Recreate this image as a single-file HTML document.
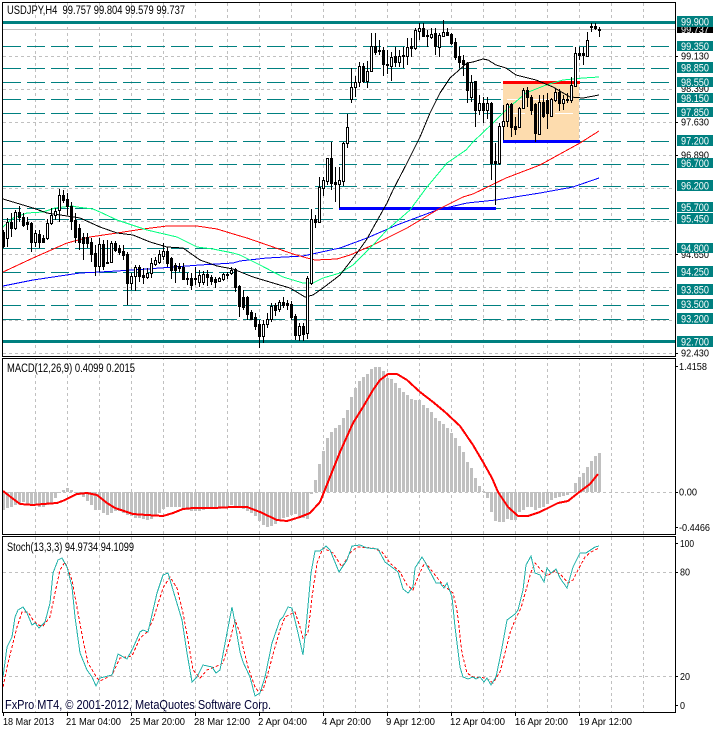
<!DOCTYPE html>
<html><head><meta charset="utf-8"><title>USDJPY,H4</title>
<style>html,body{margin:0;padding:0;background:#fff}svg{display:block}text{font-family:"Liberation Sans",sans-serif;font-size:10.5px;fill:#000}.t text,text.w{fill:#fff}polyline{shape-rendering:crispEdges}</style></head>
<body>
<svg width="713" height="729" viewBox="0 0 713 729" xmlns="http://www.w3.org/2000/svg">
<defs><clipPath id="rc"><rect x="503" y="84" width="76" height="56"/></clipPath></defs>
<rect width="713" height="729" fill="#fff"/>
<!-- vertical grid -->
<path shape-rendering="crispEdges" stroke="#c0c0c0" stroke-dasharray="3 3" fill="none" d="M35.5 3V712M67.5 3V712M99.5 3V712M131.5 3V712M163.5 3V712M195.5 3V712M227.5 3V712M259.5 3V712M291.5 3V712M323.5 3V712M355.5 3V712M387.5 3V712M419.5 3V712M451.5 3V712M483.5 3V712M515.5 3V712M547.5 3V712M579.5 3V712M611.5 3V712M643.5 3V712"/>
<!-- horizontal grid -->
<path shape-rendering="crispEdges" stroke="#c0c0c0" stroke-dasharray="3 3" fill="none" d="M3 56.5H675M3 89.5H675M3 122.5H675M3 155.5H675M3 188.5H675M3 221.5H675M3 254.5H675M3 287.5H675M3 320.5H675M3 353.5H675M3 492.5H675M3 572.5H675M3 676.5H675"/>
<!-- white under panel gaps -->
<rect x="0" y="357" width="675" height="1" fill="#fff"/><rect x="0" y="534" width="675" height="2" fill="#fff"/>
<!-- teal levels -->
<path shape-rendering="crispEdges" stroke="#008080" stroke-dasharray="18 6" fill="none" d="M3 46.5H675M3 68.5H675M3 82.5H675M3 99.5H675M3 113.5H675M3 141.5H675M3 164.5H675M3 186.5H675M3 208.5H675M3 219.5H675M3 248.5H675M3 272.5H675M3 290.5H675M3 305.5H675M3 319.5H675"/>
<path shape-rendering="crispEdges" stroke="#008080" stroke-width="3" fill="none" d="M3 22.5H675M3 341.5H675"/>
<path shape-rendering="crispEdges" stroke="#c0c0c0" fill="none" d="M3 29.5H675"/>
<!-- rectangle -->
<rect x="503" y="82" width="76" height="59" fill="#fddcae"/>
<g clip-path="url(#rc)"><path shape-rendering="crispEdges" stroke="#fff" stroke-dasharray="18 6" fill="none" d="M3 99.5H675M3 113.5H675"/></g>
<path shape-rendering="crispEdges" stroke="#ff0000" stroke-width="3" fill="none" d="M503 82.5H580"/>
<path shape-rendering="crispEdges" stroke="#0000ff" stroke-width="3" fill="none" d="M503 141.5H580M339 208.5H496"/>
<!-- MAs -->
<g fill="none" stroke-width="1">
<polyline stroke="#0000ff" points="3,286 33,280 80,273 100,272 133,270 160,268 200,265 233,263 240,261 267,258 303,256 340,248 367,238 397,225 437,210 467,203 496,200 540,193 573,187 599,178"/>
<polyline stroke="#ff0000" points="3,272 33,258 67,243 90,237 117,233 143,229 167,226 197,226 217,229 240,236 247,238 273,247 293,254 307,258 315,260 337,259 350,255 373,245 407,228 437,210 463,197 473,194 506,178 540,165 580,143 599,131"/>
<polyline stroke="#00ff7f" points="3,227 13,218 27,213 43,212 55,208 72,206 77,207 93,209 100,212 117,220 147,230 177,237 197,247 213,249 233,253 240,255 260,265 283,277 303,283 313,283 323,278 340,273 353,265 373,245 387,230 410,210 427,187 447,163 466,150 473,142 493,123 506,110 526,93 546,85 563,80 583,78 599,77"/>
<polyline stroke="#000" points="3,199 33,208 47,213 67,216 80,218 100,227 117,233 133,235 150,242 167,247 183,248 200,260 217,266 233,269 253,277 273,283 290,288 305,297 313,295 323,288 340,275 357,253 367,239 373,228 387,203 393,190 407,163 420,137 430,113 440,93 450,78 467,63 473,62 483,59 488,60 496,65 506,68 516,75 536,80 553,87 570,97 583,98 599,95"/>
</g>
<!-- wicks -->
<path shape-rendering="crispEdges" stroke="#000" fill="none" d="M3.5 230V248M7.5 218V247M11.5 213V237M15.5 210V230M19.5 206V222M23.5 213V227M27.5 217V230M31.5 222V252M35.5 230V247M39.5 230V248M43.5 235V243M47.5 219V240M51.5 208V225M55.5 208V220M59.5 189V222M63.5 190V203M67.5 193V215M71.5 202V230M75.5 213V243M79.5 224V250M83.5 233V260M87.5 233V248M91.5 238V262M95.5 245V276M99.5 238V272M103.5 240V270M107.5 240V264M111.5 241V263M115.5 241V252M119.5 245V255M123.5 245V260M127.5 252V305M131.5 273V290M135.5 265V291M139.5 265V282M143.5 268V284M147.5 268V279M151.5 258V278M155.5 257V266M159.5 250V264M163.5 243V260M167.5 247V267M171.5 257V279M175.5 263V283M179.5 263V272M183.5 263V280M187.5 273V285M191.5 273V290M195.5 267V285M199.5 270V287M203.5 271V285M207.5 270V286M211.5 275V285M215.5 277V288M219.5 277V282M223.5 273V281M227.5 272V279M231.5 267V275M235.5 268V292M239.5 285V317M243.5 290V310M247.5 296V320M251.5 310V320M255.5 313V330M259.5 320V348M263.5 320V343M267.5 313V328M271.5 303V322M275.5 303V316M279.5 300V312M283.5 297V308M287.5 300V310M291.5 301V320M295.5 314V340M299.5 323V341M303.5 323V341M307.5 276V339M311.5 209V285M315.5 215V228M319.5 177V223M323.5 177V196M327.5 158V185M331.5 142V190M335.5 167V202M339.5 167V208M343.5 142V186M347.5 114V148M351.5 68V103M355.5 76V97M359.5 62V87M363.5 63V83M367.5 61V88M371.5 33V72M375.5 33V55M379.5 40V55M383.5 47V76M387.5 50V74M391.5 52V81M395.5 47V67M399.5 50V67M403.5 47V68M407.5 38V65M411.5 38V57M415.5 28V50M419.5 23V40M423.5 23V37M427.5 30V47M431.5 28V39M435.5 28V55M439.5 33V57M443.5 20V36M447.5 28V36M451.5 33V45M455.5 38V60M459.5 47V68M463.5 55V76M467.5 62V103M471.5 75V102M475.5 81V127M479.5 95V115M483.5 97V123M487.5 97V119M491.5 102V180M495.5 143V205M499.5 123V165M503.5 105V140M507.5 103V127M511.5 103V137M515.5 117V135M519.5 107V128M523.5 88V109M527.5 87V107M531.5 95V115M535.5 103V142M539.5 95V135M543.5 95V118M547.5 93V129M551.5 98V116M555.5 88V102M559.5 89V111M563.5 95V110M567.5 93V103M571.5 77V103M575.5 47V87M579.5 47V60M583.5 47V65M587.5 32V57M591.5 23V32M595.5 23V30M599.5 27V37"/>
<!-- black bodies -->
<path shape-rendering="crispEdges" stroke="#000" fill="#000" d="M2.5 232.5h2v14h-2zM10.5 222.5h2v6h-2zM18.5 212.5h2v5h-2zM22.5 217.5h2v8h-2zM26.5 222.5h2v2h-2zM30.5 223.5h2v19h-2zM38.5 234.5h2v8h-2zM42.5 238.5h2v4h-2zM62.5 195.5h2v5h-2zM66.5 199.5h2v7h-2zM70.5 206.5h2v15h-2zM74.5 220.5h2v17h-2zM78.5 228.5h2v14h-2zM82.5 237.5h2v6h-2zM86.5 237.5h2v6h-2zM90.5 242.5h2v12h-2zM94.5 253.5h2v13h-2zM102.5 244.5h2v22h-2zM106.5 262.5h2v1h-2zM114.5 243.5h2v7h-2zM118.5 248.5h2v4h-2zM122.5 251.5h2v4h-2zM126.5 254.5h2v29h-2zM138.5 267.5h2v9h-2zM142.5 275.5h2v2h-2zM166.5 251.5h2v12h-2zM170.5 258.5h2v12h-2zM174.5 265.5h2v5h-2zM178.5 266.5h2v2h-2zM182.5 267.5h2v12h-2zM186.5 278.5h2v1h-2zM190.5 278.5h2v7h-2zM194.5 278.5h2v1h-2zM206.5 274.5h2v3h-2zM210.5 277.5h2v4h-2zM214.5 279.5h2v3h-2zM234.5 269.5h2v18h-2zM238.5 286.5h2v20h-2zM242.5 297.5h2v10h-2zM246.5 297.5h2v17h-2zM250.5 312.5h2v7h-2zM254.5 317.5h2v9h-2zM258.5 324.5h2v12h-2zM274.5 305.5h2v5h-2zM282.5 302.5h2v3h-2zM286.5 303.5h2v2h-2zM290.5 304.5h2v13h-2zM294.5 316.5h2v19h-2zM302.5 326.5h2v8h-2zM314.5 219.5h2v3h-2zM330.5 158.5h2v25h-2zM334.5 182.5h2v2h-2zM362.5 66.5h2v15h-2zM374.5 46.5h2v6h-2zM378.5 50.5h2v1h-2zM382.5 50.5h2v14h-2zM386.5 64.5h2v1h-2zM394.5 56.5h2v6h-2zM402.5 55.5h2v1h-2zM410.5 46.5h2v2h-2zM422.5 28.5h2v8h-2zM426.5 35.5h2v1h-2zM434.5 33.5h2v13h-2zM446.5 32.5h2v3h-2zM450.5 34.5h2v9h-2zM454.5 42.5h2v15h-2zM458.5 56.5h2v6h-2zM462.5 60.5h2v4h-2zM466.5 63.5h2v27h-2zM474.5 81.5h2v29h-2zM482.5 103.5h2v7h-2zM490.5 103.5h2v60h-2zM494.5 161.5h2v2h-2zM510.5 104.5h2v23h-2zM514.5 126.5h2v3h-2zM526.5 90.5h2v7h-2zM530.5 97.5h2v13h-2zM534.5 104.5h2v29h-2zM542.5 102.5h2v14h-2zM546.5 100.5h2v13h-2zM558.5 92.5h2v11h-2zM566.5 99.5h2v1h-2zM578.5 53.5h2v2h-2zM582.5 53.5h2v2h-2zM590.5 26.5h2v1h-2zM594.5 26.5h2v2h-2zM598.5 29.5h2v1h-2z"/>
<!-- white bodies -->
<path shape-rendering="crispEdges" stroke="#000" fill="#fff" d="M6.5 222.5h2v16h-2zM14.5 212.5h2v16h-2zM34.5 233.5h2v9h-2zM46.5 223.5h2v15h-2zM50.5 215.5h2v8h-2zM54.5 211.5h2v4h-2zM58.5 195.5h2v15h-2zM98.5 244.5h2v22h-2zM110.5 243.5h2v19h-2zM130.5 276.5h2v7h-2zM134.5 267.5h2v9h-2zM146.5 273.5h2v4h-2zM150.5 263.5h2v10h-2zM154.5 260.5h2v4h-2zM158.5 254.5h2v8h-2zM162.5 251.5h2v5h-2zM198.5 275.5h2v7h-2zM202.5 274.5h2v8h-2zM218.5 278.5h2v3h-2zM222.5 274.5h2v5h-2zM226.5 274.5h2v1h-2zM230.5 270.5h2v3h-2zM262.5 324.5h2v12h-2zM266.5 319.5h2v5h-2zM270.5 306.5h2v13h-2zM278.5 302.5h2v7h-2zM298.5 326.5h2v9h-2zM306.5 278.5h2v55h-2zM310.5 219.5h2v64h-2zM318.5 187.5h2v35h-2zM322.5 180.5h2v8h-2zM326.5 158.5h2v23h-2zM338.5 180.5h2v4h-2zM342.5 143.5h2v38h-2zM346.5 127.5h2v16h-2zM350.5 87.5h2v12h-2zM354.5 82.5h2v5h-2zM358.5 66.5h2v16h-2zM366.5 71.5h2v10h-2zM370.5 46.5h2v25h-2zM390.5 57.5h2v9h-2zM398.5 56.5h2v6h-2zM406.5 47.5h2v9h-2zM414.5 30.5h2v18h-2zM418.5 28.5h2v3h-2zM430.5 34.5h2v3h-2zM438.5 35.5h2v12h-2zM442.5 32.5h2v4h-2zM470.5 82.5h2v15h-2zM478.5 103.5h2v7h-2zM486.5 103.5h2v7h-2zM498.5 126.5h2v37h-2zM502.5 121.5h2v5h-2zM506.5 104.5h2v17h-2zM518.5 108.5h2v19h-2zM522.5 90.5h2v18h-2zM538.5 102.5h2v32h-2zM550.5 99.5h2v17h-2zM554.5 92.5h2v8h-2zM562.5 99.5h2v4h-2zM570.5 85.5h2v15h-2zM574.5 53.5h2v33h-2zM586.5 40.5h2v16h-2z"/>
<!-- MACD histogram -->
<path shape-rendering="crispEdges" stroke="#c0c0c0" stroke-width="3" fill="none" d="M3.5 492V510M7.5 492V508M11.5 492V507M15.5 492V505M19.5 492V504M23.5 492V502M27.5 492V504M31.5 492V504M35.5 492V504M39.5 492V507M43.5 492V507M47.5 492V505M51.5 492V503M55.5 492V498M59.5 492V493M63.5 492V490M67.5 492V488M71.5 492V490M75.5 492V493M79.5 492V495M83.5 492V497M87.5 492V501M91.5 492V505M95.5 492V510M99.5 492V510M103.5 492V513M107.5 492V515M111.5 492V513M115.5 492V511M119.5 492V511M123.5 492V513M127.5 492V515M131.5 492V516M135.5 492V518M139.5 492V518M143.5 492V519M147.5 492V520M151.5 492V519M155.5 492V516M159.5 492V513M163.5 492V509M167.5 492V507M171.5 492V507M175.5 492V507M179.5 492V507M183.5 492V509M187.5 492V510M191.5 492V511M195.5 492V511M199.5 492V511M203.5 492V510M207.5 492V509M211.5 492V509M215.5 492V509M219.5 492V509M223.5 492V508M227.5 492V507M231.5 492V505M235.5 492V506M239.5 492V507M243.5 492V509M247.5 492V511M251.5 492V513M255.5 492V516M259.5 492V521M263.5 492V525M267.5 492V527M271.5 492V526M275.5 492V524M279.5 492V521M283.5 492V518M287.5 492V517M291.5 492V515M295.5 492V514M299.5 492V517M303.5 492V518M307.5 492V519M311.5 492V494M315.5 492V480M319.5 492V464M323.5 492V451M327.5 492V438M331.5 492V432M335.5 492V428M339.5 492V425M343.5 492V418M347.5 492V410M351.5 492V397M355.5 492V388M359.5 492V381M363.5 492V377M367.5 492V374M371.5 492V369M375.5 492V367M379.5 492V367M383.5 492V371M387.5 492V378M391.5 492V379M395.5 492V383M399.5 492V388M403.5 492V392M407.5 492V395M411.5 492V399M415.5 492V400M419.5 492V400M423.5 492V405M427.5 492V408M431.5 492V412M435.5 492V418M439.5 492V421M443.5 492V424M447.5 492V428M451.5 492V433M455.5 492V438M459.5 492V446M463.5 492V452M467.5 492V462M471.5 492V468M475.5 492V478M479.5 492V486M483.5 492V491M487.5 492V498M491.5 492V512M495.5 492V521M499.5 492V522M503.5 492V522M507.5 492V519M511.5 492V520M515.5 492V520M519.5 492V512M523.5 492V510M527.5 492V507M531.5 492V507M535.5 492V510M539.5 492V508M543.5 492V507M547.5 492V504M551.5 492V500M555.5 492V498M559.5 492V497M563.5 492V496M567.5 492V495M571.5 492V493M575.5 492V483M579.5 492V477M583.5 492V473M587.5 492V467M591.5 492V461M595.5 492V456M599.5 492V453"/>
<polyline fill="none" stroke="#ff0000" stroke-width="2" points="3,491 12,498 20,504 33,505 43,504 57,503 65,500 77,494 87,493 97,495 107,503 115,508 127,512 133,514 147,515 163,516 173,513 183,509 193,508 213,508 233,507 247,507 260,512 277,520 287,521 300,517 310,513 320,502 330,477 340,452 353,423 363,407 373,390 380,380 388,374 397,374 407,380 420,392 433,402 445,412 460,426 473,445 483,462 492,478 498,492 508,507 518,516 528,516 540,512 558,503 568,501 578,493 590,484 598,474"/>
<!-- Stoch -->
<polyline fill="none" stroke="#ff0000" stroke-dasharray="3 2" points="3,687 8,663 13,643 17,627 22,612 28,612 33,620 38,625 43,626 50,617 55,593 60,570 65,562 72,580 78,613 83,640 88,663 97,678 100,681 112,675 120,658 132,656 140,638 147,632 153,620 163,588 170,577 177,588 183,613 188,640 193,670 200,678 207,670 215,667 223,663 230,640 235,620 240,633 243,647 248,667 255,687 258,691 263,690 268,673 275,647 280,630 285,617 295,612 300,627 303,638 308,633 312,597 317,563 323,548 333,553 342,567 350,553 357,547 373,548 382,552 390,563 400,572 407,585 413,590 418,577 425,562 435,575 443,585 453,593 457,610 462,653 467,673 473,677 486,678 493,683 500,672 505,653 510,633 515,620 521,608 526,590 531,572 535,563 541,570 547,576 555,571 561,575 568,583 573,580 578,570 585,557 591,552 599,548"/>
<polyline fill="none" stroke="#20b2aa" points="3,677 7,647 12,637 15,617 18,610 23,607 27,613 32,625 35,623 39,628 45,622 50,603 53,573 58,560 62,558 67,567 72,587 75,617 80,653 87,670 92,677 96,686 100,678 112,675 118,654 127,659 133,648 140,632 143,630 148,632 157,593 163,575 168,573 173,590 182,620 187,653 192,682 197,677 203,665 212,667 216,673 220,670 227,633 232,607 235,623 240,652 243,662 250,677 255,696 260,693 265,677 272,643 280,620 283,617 288,607 292,608 298,633 303,655 307,617 311,573 315,551 320,551 326,546 330,550 339,572 347,560 352,546 360,545 367,548 378,549 385,562 393,568 398,572 403,589 408,593 413,587 415,568 422,557 425,562 436,583 440,583 444,588 447,583 452,597 455,627 460,667 463,677 468,679 473,677 476,679 480,677 484,682 487,678 491,685 496,677 501,653 507,620 515,614 518,610 523,590 526,565 531,556 535,573 540,575 544,582 547,568 551,573 556,569 560,578 567,588 573,567 580,553 586,553 595,547 599,546"/>
<!-- frames -->
<path shape-rendering="crispEdges" stroke="#000" fill="none" d="M2.5 2.5H675.5V356.5H2.5ZM2.5 358.5H675.5V534.5H2.5ZM2.5 536.5H675.5V712.5H2.5Z"/>
<path shape-rendering="crispEdges" stroke="#000" fill="none" d="M3.5 712V716M67.5 712V716M131.5 712V716M195.5 712V716M259.5 712V716M323.5 712V716M387.5 712V716M451.5 712V716M515.5 712V716M579.5 712V716M675 56.5H678M675 122.5H678M675 155.5H678M675 254.5H678M675 353.5H678M675 366.5H678M675 492.5H678M675 527.5H678M675 543.5H678M675 572.5H678M675 676.5H678M675 705.5H678"/>
<!-- headers -->
<text x="7" y="14" textLength="178" lengthAdjust="spacingAndGlyphs" style="font-size:11.5px" xml:space="preserve">USDJPY,H4  99.757 99.804 99.579 99.737</text>
<text x="7" y="372" textLength="128" lengthAdjust="spacingAndGlyphs" style="font-size:11.5px">MACD(12,26,9) 0.4099 0.2015</text>
<text x="7" y="551" textLength="127" lengthAdjust="spacingAndGlyphs" style="font-size:11.5px">Stoch(13,3,3) 94.9734 94.1099</text>
<text x="5" y="709" textLength="266" lengthAdjust="spacingAndGlyphs" style="font-size:13px;fill:#000033">FxPro MT4, © 2001-2012, MetaQuotes Software Corp.</text>
<!-- x labels -->
<text x="3" y="725" textLength="51" lengthAdjust="spacingAndGlyphs">18 Mar 2013</text>
<text x="66" y="725" textLength="55" lengthAdjust="spacingAndGlyphs">21 Mar 04:00</text>
<text x="130" y="725" textLength="55" lengthAdjust="spacingAndGlyphs">25 Mar 20:00</text>
<text x="194" y="725" textLength="56" lengthAdjust="spacingAndGlyphs">28 Mar 12:00</text>
<text x="258" y="725" textLength="49" lengthAdjust="spacingAndGlyphs">2 Apr 04:00</text>
<text x="322" y="725" textLength="49" lengthAdjust="spacingAndGlyphs">4 Apr 20:00</text>
<text x="386" y="725" textLength="49" lengthAdjust="spacingAndGlyphs">9 Apr 12:00</text>
<text x="450" y="725" textLength="55" lengthAdjust="spacingAndGlyphs">12 Apr 04:00</text>
<text x="515" y="725" textLength="53" lengthAdjust="spacingAndGlyphs">16 Apr 20:00</text>
<text x="579" y="725" textLength="53" lengthAdjust="spacingAndGlyphs">19 Apr 12:00</text>
<!-- right axis gray labels -->
<text x="681" y="59.500" textLength="28" lengthAdjust="spacingAndGlyphs">99.130</text>
<text x="681" y="92" textLength="28" lengthAdjust="spacingAndGlyphs">98.390</text>
<text x="681" y="125.500" textLength="28" lengthAdjust="spacingAndGlyphs">97.630</text>
<text x="681" y="158.500" textLength="28" lengthAdjust="spacingAndGlyphs">96.890</text>
<text x="681" y="258" textLength="28" lengthAdjust="spacingAndGlyphs">94.650</text>
<text x="681" y="356.500" textLength="28" lengthAdjust="spacingAndGlyphs">92.430</text>
<text x="679" y="370" textLength="28" lengthAdjust="spacingAndGlyphs">1.4158</text>
<text x="679" y="495.500" textLength="18" lengthAdjust="spacingAndGlyphs">0.00</text>
<text x="679" y="531" textLength="31" lengthAdjust="spacingAndGlyphs">-0.4466</text>
<text x="680" y="547" textLength="14" lengthAdjust="spacingAndGlyphs">100</text>
<text x="680" y="575.500" textLength="10" lengthAdjust="spacingAndGlyphs">80</text>
<text x="680" y="680" textLength="10" lengthAdjust="spacingAndGlyphs">20</text>
<text x="680" y="709" textLength="5" lengthAdjust="spacingAndGlyphs">0</text>
<!-- price -->
<rect x="677" y="24" width="36" height="9" fill="#000"/>
<text class="w" x="681" y="33" textLength="28" lengthAdjust="spacingAndGlyphs">99.737</text>
<!-- teal labels -->
<g fill="#008080" shape-rendering="crispEdges">
<rect x="677" y="16" width="36" height="11"/><rect x="677" y="41" width="36" height="10"/><rect x="677" y="62" width="36" height="11"/><rect x="677" y="77" width="36" height="10"/><rect x="677" y="93" width="36" height="10"/><rect x="677" y="107" width="36" height="10"/><rect x="677" y="135" width="36" height="11"/><rect x="677" y="158" width="36" height="10"/><rect x="677" y="180" width="36" height="11"/><rect x="677" y="202" width="36" height="10"/><rect x="677" y="213" width="36" height="11"/><rect x="677" y="243" width="36" height="10"/><rect x="677" y="266" width="36" height="11"/><rect x="677" y="284" width="36" height="11"/><rect x="677" y="299" width="36" height="10"/><rect x="677" y="313" width="36" height="11"/><rect x="677" y="336" width="36" height="11"/>
</g>
<g class="t" style="font-size:11px">
<text style="font-size:11px" x="681" y="25.500" textLength="28" lengthAdjust="spacingAndGlyphs">99.900</text>
<text style="font-size:11px" x="681" y="50" textLength="28" lengthAdjust="spacingAndGlyphs">99.350</text>
<text style="font-size:11px" x="681" y="71.500" textLength="28" lengthAdjust="spacingAndGlyphs">98.850</text>
<text style="font-size:11px" x="681" y="86" textLength="28" lengthAdjust="spacingAndGlyphs">98.550</text>
<text style="font-size:11px" x="681" y="102" textLength="28" lengthAdjust="spacingAndGlyphs">98.150</text>
<text style="font-size:11px" x="681" y="116" textLength="28" lengthAdjust="spacingAndGlyphs">97.850</text>
<text style="font-size:11px" x="681" y="144.500" textLength="28" lengthAdjust="spacingAndGlyphs">97.200</text>
<text style="font-size:11px" x="681" y="167" textLength="28" lengthAdjust="spacingAndGlyphs">96.700</text>
<text style="font-size:11px" x="681" y="189.500" textLength="28" lengthAdjust="spacingAndGlyphs">96.200</text>
<text style="font-size:11px" x="681" y="211" textLength="28" lengthAdjust="spacingAndGlyphs">95.700</text>
<text style="font-size:11px" x="681" y="222.500" textLength="28" lengthAdjust="spacingAndGlyphs">95.450</text>
<text style="font-size:11px" x="681" y="252" textLength="28" lengthAdjust="spacingAndGlyphs">94.800</text>
<text style="font-size:11px" x="681" y="275.500" textLength="28" lengthAdjust="spacingAndGlyphs">94.250</text>
<text style="font-size:11px" x="681" y="293.500" textLength="28" lengthAdjust="spacingAndGlyphs">93.850</text>
<text style="font-size:11px" x="681" y="308" textLength="28" lengthAdjust="spacingAndGlyphs">93.500</text>
<text style="font-size:11px" x="681" y="322.500" textLength="28" lengthAdjust="spacingAndGlyphs">93.200</text>
<text style="font-size:11px" x="681" y="345.500" textLength="28" lengthAdjust="spacingAndGlyphs">92.700</text>
</g>
</svg>
</body></html>
